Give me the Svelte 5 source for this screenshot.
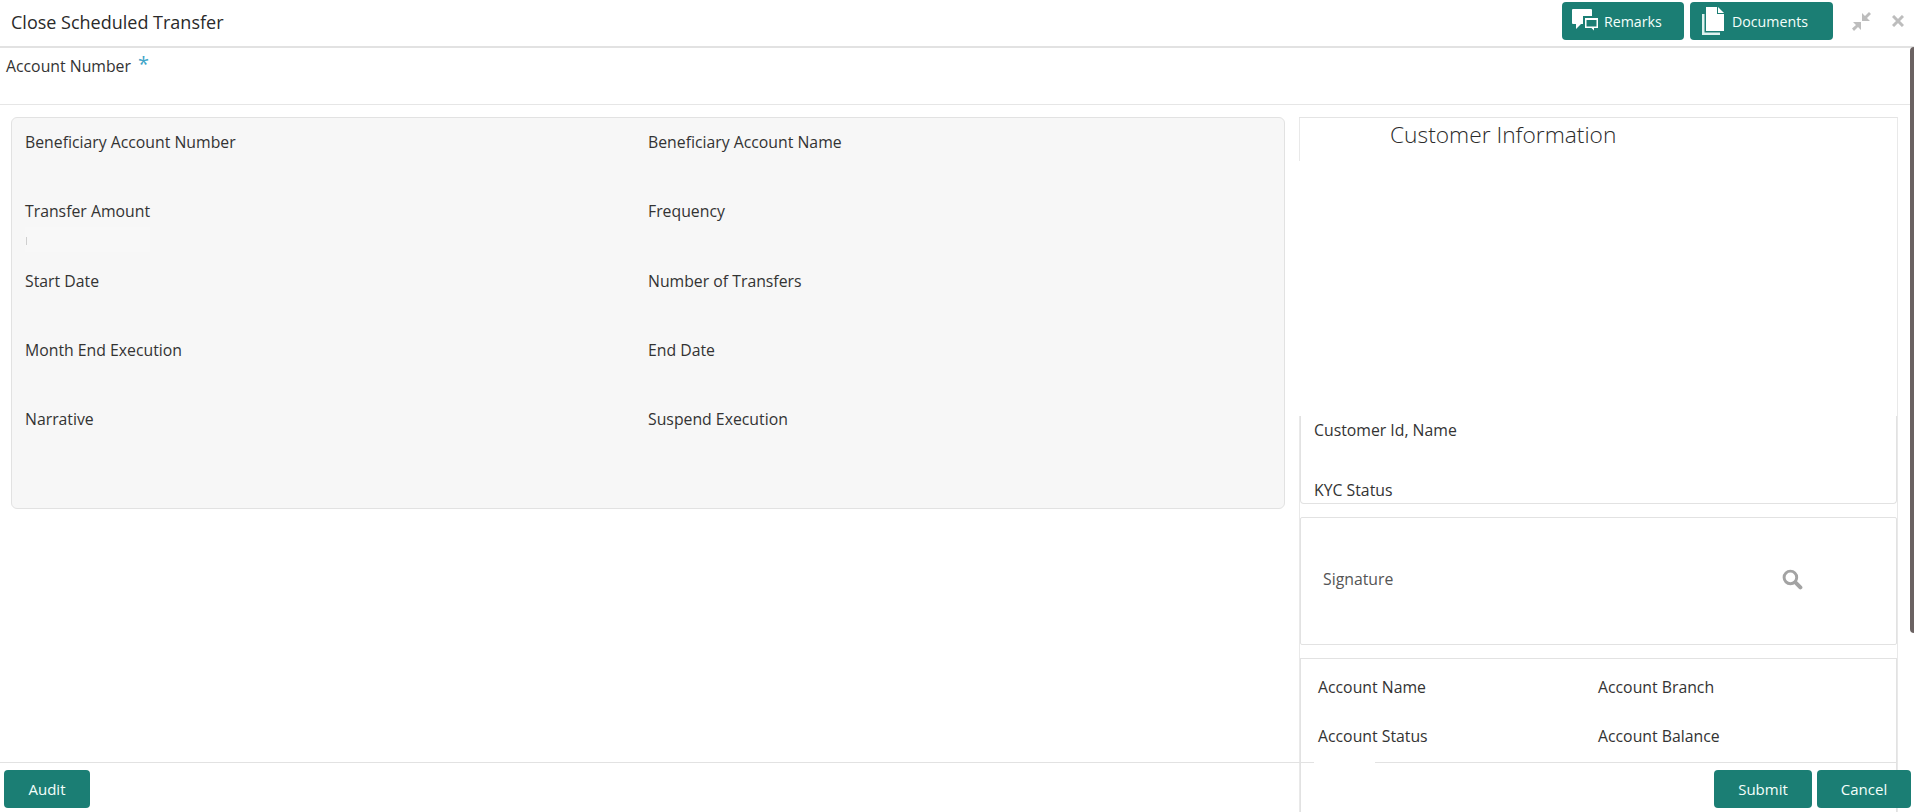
<script>
	const fields = [
		['Beneficiary Account Number', 'Beneficiary Account Name'],
		['Transfer Amount', 'Frequency'],
		['Start Date', 'Number of Transfers'],
		['Month End Execution', 'End Date'],
		['Narrative', 'Suspend Execution']
	];
	const accountFields = ['Account Name', 'Account Branch', 'Account Status', 'Account Balance'];
</script>

<div class="page">
	<header class="topbar">
		<h1>Close Scheduled Transfer</h1>
		<div class="top-actions">
			<button class="btn remarks">
				<svg width="27" height="24" viewBox="0 0 27 24">
					<path fill="#fff" d="M1 0h18a1 1 0 0 1 1 1v14H9l-5 5v-5H1a1 1 0 0 1-1-1V1a1 1 0 0 1 1-1z" />
					<path fill="#fff" stroke="#1b7e74" stroke-width="2" d="M12 8h15v12h-4v4l-4-4h-7z" />
					<path fill="#1b7e74" d="M14.500 11h10v6.500h-10z" />
				</svg>
				Remarks
			</button>
			<button class="btn documents">
				<svg width="22" height="28" viewBox="0 0 22 28">
					<path fill="#fff" d="M4 0h11v7h7v17H4z" />
					<path fill="#fff" d="M16 0l6 6h-6z" />
					<path fill="#dff2ef" d="M0 7h2.500v18.500H18V28H0z" />
				</svg>
				Documents
			</button>
			<svg class="win-icon" width="20" height="20" viewBox="0 0 20 20" fill="#bdbdbd">
				<path d="M10 2v8h8l-3-3 4-4-2-2-4 4z" />
				<path d="M9 19v-8H1l3 3-4 3.500L2 20l4-4z" />
			</svg>
			<svg class="win-icon close" width="12" height="12" viewBox="0 0 12 12">
				<path stroke="#bdbdbd" stroke-width="3" d="M1 1l10 10M11 1L1 11" />
			</svg>
		</div>
	</header>

	<div class="account-row">
		<span>Account Number</span><span class="req">*</span>
	</div>

	<main class="content">
		<section class="details">
			{#each fields as row, i}
				<div class="field-row">
					<div class="cell">
						<span>{row[0]}</span>
						{#if i === 1}
							<div class="amount"><i></i></div>
						{/if}
					</div>
					<div class="cell"><span>{row[1]}</span></div>
				</div>
			{/each}
		</section>

		<aside class="side">
			<h2>Customer Information</h2>
			<div class="customer">
				<span>Customer Id, Name</span>
				<span>KYC Status</span>
			</div>
			<div class="signature">
				<span>Signature</span>
				<svg width="21" height="21" viewBox="0 0 20 20" fill="none" stroke="#a3a3a3">
					<circle cx="8" cy="8" r="6" stroke-width="2.800" />
					<path stroke-width="3.800" stroke-linecap="round" d="M13 13l4.500 4.500" />
				</svg>
			</div>
			<div class="account">
				{#each accountFields as name}
					<span>{name}</span>
				{/each}
			</div>
		</aside>
	</main>

	<footer class="footer">
		<button class="btn audit">Audit</button>
		<div class="footer-right">
			<button class="btn submit">Submit</button>
			<button class="btn cancel">Cancel</button>
		</div>
	</footer>

	<div class="scroll-thumb"></div>
</div>

<style>
	:global(body) {
		overflow: hidden;
		background: #fff;
	}

	.page {
		position: relative;
		height: 812px;
		overflow: hidden;
		font-family: 'Open Sans', 'Noto Sans', sans-serif;
		font-size: 15.800px;
		color: #333;
	}

	.topbar {
		display: flex;
		justify-content: space-between;
		align-items: flex-start;
		height: 48px;
		box-sizing: border-box;
		padding: 2px 10px 0 11px;
		border-bottom: 2px solid #e2e2e2;
	}

	h1 {
		margin: 0;
		padding-top: 8px;
		font-size: 18px;
		font-weight: 400;
		color: #2a2a2a;
	}

	.top-actions {
		display: flex;
		align-items: center;
	}

	.btn {
		display: flex;
		align-items: center;
		justify-content: center;
		height: 38px;
		padding: 0;
		border: none;
		border-radius: 4px;
		background: #1b7e74;
		color: #f4fffb;
		font-family: inherit;
		font-size: 15px;
	}

	.remarks {
		width: 122px;
		justify-content: flex-start;
		padding-left: 10px;
		gap: 5px;
		margin-right: 6px;
		font-size: 14.200px;
	}

	.documents {
		width: 143px;
		justify-content: flex-start;
		padding-left: 12px;
		gap: 8px;
		margin-right: 19px;
		font-size: 14.200px;
	}

	.win-icon {
		display: block;
		margin-right: 20px;
	}

	.win-icon.close {
		margin-right: 0;
	}

	.account-row {
		height: 57px;
		padding: 3px 0 0 6px;
		box-sizing: border-box;
		border-bottom: 1px solid #e6e6e6;
	}

	.req {
		margin-left: 7px;
		color: #3fa5c8;
		font-size: 20px;
		position: relative;
		top: -1px;
	}

	.content {
		display: flex;
		align-items: flex-start;
		gap: 14px;
		padding: 12px 0 0 11px;
	}

	.details {
		width: 1274px;
		height: 392px;
		box-sizing: border-box;
		padding: 13px 13px;
		background: #f7f7f7;
		border: 1px solid #e2e2e2;
		border-radius: 6px;
	}

	.field-row {
		display: grid;
		grid-template-columns: 623px 1fr;
		height: 69.300px;
	}

	.cell {
		position: relative;
	}

	/* empty read-only amount input under its label */
	.amount {
		position: absolute;
		left: 0;
		top: 27px;
		width: 125px;
		height: 25px;
		background: #f8f8f8;
	}

	.amount i {
		display: block;
		width: 1px;
		height: 8px;
		margin: 10px 0 0 1px;
		background: #cfcfcf;
	}

	.side {
		position: relative;
		width: 599px;
		height: 695px;
		box-sizing: border-box;
		padding: 0 0 0 1px;
		border-top: 1px solid #e4e4e4;
		border-right: 1px solid #e9e9e9;
	}

	.side::before,
	.side::after {
		content: '';
		position: absolute;
		left: 0;
		width: 1px;
		background: #e9e9e9;
	}

	.side::before {
		top: 0;
		height: 43px;
	}

	.side::after {
		top: 298px;
		bottom: 0;
	}

	h2 {
		margin: 0;
		padding: 1px 0 0 90px;
		height: 298px;
		box-sizing: border-box;
		font-size: 22.750px;
		font-weight: 300;
		color: #2b2b2b;
	}

	.customer {
		display: flex;
		flex-direction: column;
		gap: 38px;
		height: 88px;
		box-sizing: border-box;
		padding: 3px 0 0 13px;
		border: 1px solid #e2e2e2;
		border-top: none;
		border-radius: 0 0 4px 4px;
		overflow: hidden;
	}

	.signature {
		display: flex;
		align-items: center;
		justify-content: space-between;
		height: 128px;
		box-sizing: border-box;
		margin-top: 13px;
		padding: 0 93px 4px 22px;
		border: 1px solid #e2e2e2;
		border-radius: 2px;
		color: #555;
	}

	.account {
		display: grid;
		grid-template-columns: 280px 1fr;
		row-gap: 27px;
		height: 180px;
		box-sizing: border-box;
		margin-top: 13px;
		padding: 17px 0 0 17px;
		border: 1px solid #e2e2e2;
		align-content: start;
	}

	.footer {
		position: absolute;
		left: 0;
		right: 3px;
		bottom: 0;
		height: 50px;
		display: flex;
		justify-content: space-between;
		align-items: flex-start;
		padding: 8px 0 0 4px;
		box-sizing: border-box;
	}

	.footer::before {
		content: '';
		position: absolute;
		top: 0;
		left: 0;
		width: 1897px;
		height: 1px;
		background: linear-gradient(to right, #e2e2e2 1314px, #fff 1314px, #fff 1375px, #e2e2e2 1375px);
	}

	.footer-right {
		display: flex;
		gap: 5px;
	}

	.audit {
		width: 86px;
	}

	.submit {
		width: 98px;
	}

	.cancel {
		width: 94px;
	}

	.scroll-thumb {
		position: absolute;
		right: 0;
		top: 47px;
		width: 4px;
		height: 586px;
		background: #6b6262;
		border-radius: 4px 0 0 4px;
	}
</style>
